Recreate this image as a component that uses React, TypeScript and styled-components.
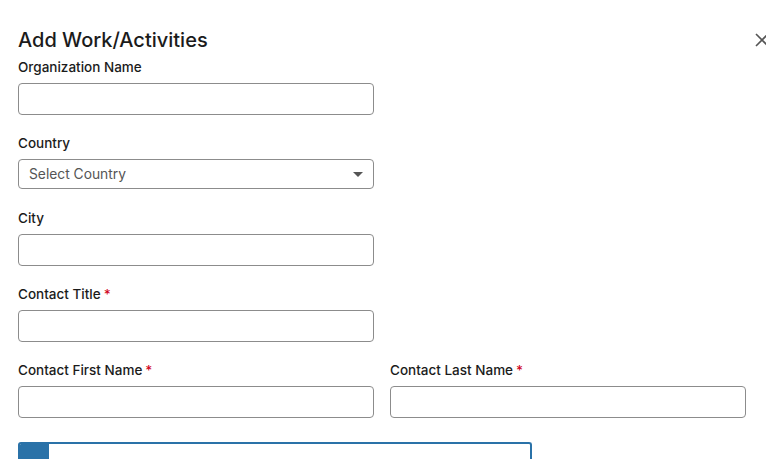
import React from "react";
import styled, { createGlobalStyle } from "styled-components";

const Global = createGlobalStyle`
  html, body { margin: 0; padding: 0; background: #fff; }
  body { font-family: Inter, "Liberation Sans", Arial, sans-serif; color: #1b1b1b; overflow: hidden; }
  * { box-sizing: border-box; }
`;

const Modal = styled.div`
  position: relative;
  width: 766px;
  height: 459px;
  padding: 28px 0 0 18px;
  overflow: hidden;
`;

const Title = styled.h2`
  margin: 0 0 6px;
  font-size: 20px;
  line-height: 24px;
  font-weight: 500;
  color: #1b1b1b;
`;

const Close = styled.button`
  position: absolute;
  top: 31px;
  left: 753px;
  width: 18px;
  height: 18px;
  padding: 0;
  border: none;
  background: none;
  cursor: pointer;
`;

const Field = styled.div<{ $gap?: number }>`
  display: flex;
  flex-direction: column;
  width: 356px;
  margin-bottom: ${(p) => p.$gap ?? 19}px;
`;

const Row = styled.div`
  display: flex;
  gap: 16px;
`;

const Label = styled.label`
  font-size: 13.5px;
  line-height: 18px;
  font-weight: 500;
  margin-bottom: 7px;
  color: #1b1b1b;
`;

const Req = styled.span`
  color: #d0021b;
  margin-left: 3px;
`;

const Input = styled.input`
  height: 32px;
  width: 100%;
  border: 1px solid #8c8c8c;
  border-radius: 4px;
  background: #fff;
  font: inherit;
`;

const SelectBox = styled.div`
  height: 30px;
  border: 1px solid #8c8c8c;
  border-radius: 4px;
  display: flex;
  align-items: center;
  justify-content: space-between;
  padding: 0 10px;
  font-size: 13.8px;
  color: #555;
`;

const Caret = styled.span`
  width: 0;
  height: 0;
  border-left: 5px solid transparent;
  border-right: 5px solid transparent;
  border-top: 5px solid #555;
`;

const Upload = styled.div`
  display: flex;
  width: 514px;
  height: 30px;
  margin-top: 5px;
  border: 2px solid #2a72a8;
  border-bottom: none;
  border-radius: 3px 3px 0 0;
  overflow: hidden;
`;

const UploadTab = styled.div`
  width: 31px;
  margin: -2px 0 0 -2px;
  background: #2a72a8;
`;

export default function App() {
  return (
    <>
      <Global />
      <Modal>
        <Title>Add Work/Activities</Title>
        <Close aria-label="Close">
          <svg width="18" height="18" viewBox="0 0 18 18">
            <path d="M3 3 L15 15 M15 3 L3 15" stroke="#555" strokeWidth="1.6" />
          </svg>
        </Close>
        <Field>
          <Label>Organization Name</Label>
          <Input />
        </Field>
        <Field $gap={20}>
          <Label>Country</Label>
          <SelectBox>
            <span>Select Country</span>
            <Caret />
          </SelectBox>
        </Field>
        <Field>
          <Label>City</Label>
          <Input />
        </Field>
        <Field>
          <Label>
            Contact Title<Req>*</Req>
          </Label>
          <Input />
        </Field>
        <Row>
          <Field>
            <Label>
              Contact First Name<Req>*</Req>
            </Label>
            <Input />
          </Field>
          <Field>
            <Label>
              Contact Last Name<Req>*</Req>
            </Label>
            <Input />
          </Field>
        </Row>
        <Upload>
          <UploadTab />
        </Upload>
      </Modal>
    </>
  );
}
